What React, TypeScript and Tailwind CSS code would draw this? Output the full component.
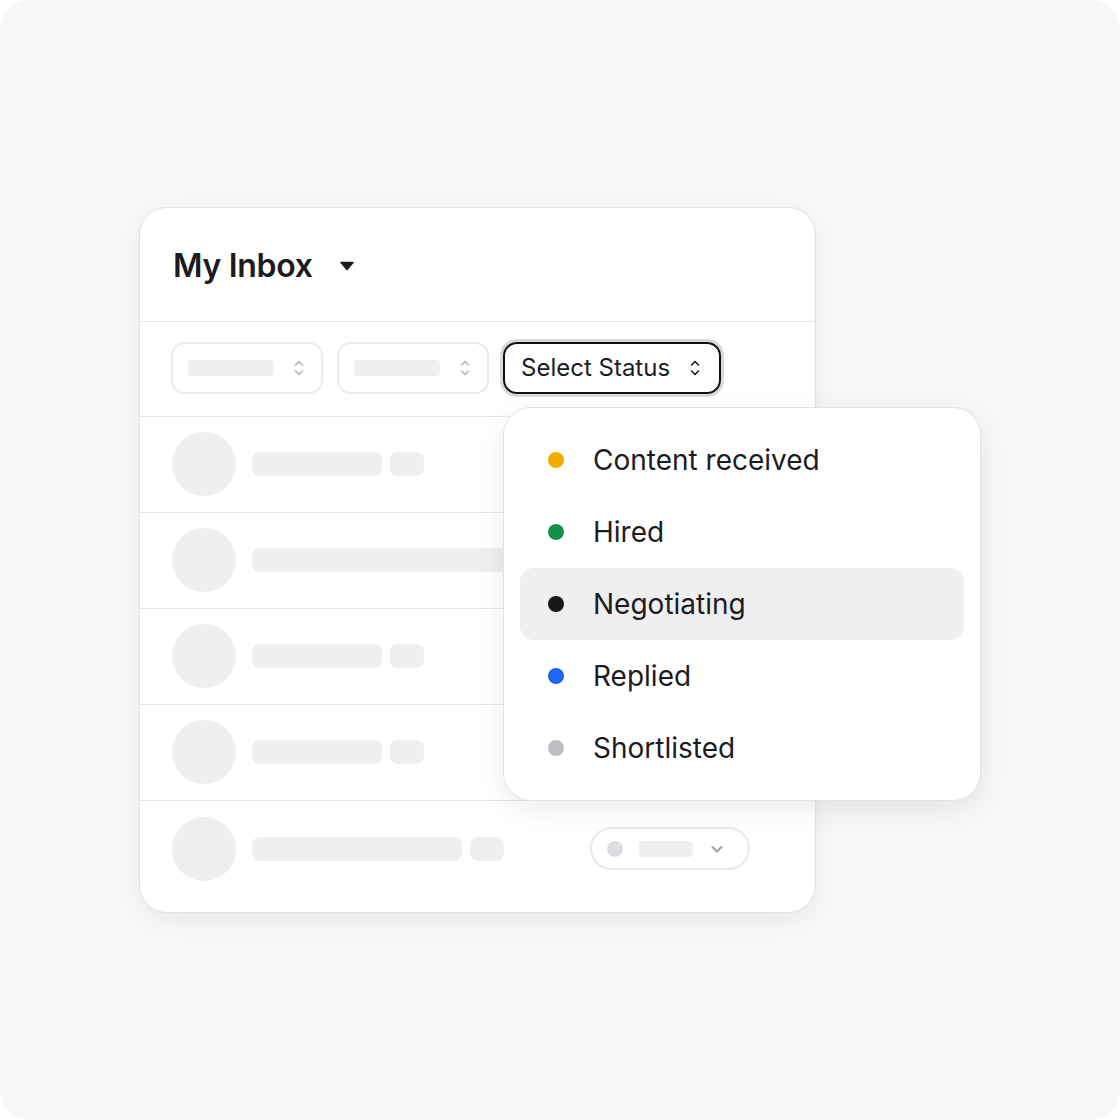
import React from 'react';

const font = { fontFamily: 'Inter, "Noto Sans", sans-serif' };

function UpDown({ color = '#a1a1aa', w = 12 }: { color?: string; w?: number }) {
  return (
    <svg width={w} height={w * 1.5} viewBox="0 0 12 18" fill="none">
      <path d="M2.5 6 L6 2.5 L9.5 6" stroke={color} strokeWidth="1.6" strokeLinecap="round" strokeLinejoin="round" />
      <path d="M2.5 12 L6 15.5 L9.5 12" stroke={color} strokeWidth="1.6" strokeLinecap="round" strokeLinejoin="round" />
    </svg>
  );
}

function SkelSelect() {
  return (
    <div className="flex h-[52px] w-[152px] items-center justify-between rounded-[14px] border-2 border-[#ececee] pl-[15px] pr-[16px]">
      <div className="h-[16px] w-[86px] rounded-[4px] bg-[#efeef0]" />
      <UpDown color="#b4b4bb" />
    </div>
  );
}

function Row({ long, wide, pill, last }: { long?: boolean; wide?: boolean; pill?: boolean; last?: boolean }) {
  return (
    <div className={`flex h-[96px] items-center pl-[32px] pb-[1px] ${last ? '' : 'border-b border-[#e6e6e8]'}`}>
      <div className="h-[64px] w-[64px] rounded-full bg-[#efeef0]" />
      {long ? (
        <div className="ml-[16px] h-[24px] w-[300px] rounded-[8px] bg-[#efeef0]" />
      ) : (
        <>
          <div className={`ml-[16px] h-[24px] rounded-[8px] bg-[#efeef0] ${wide ? 'w-[210px]' : 'w-[130px]'}`} />
          <div className="ml-[8px] h-[24px] w-[34px] rounded-[8px] bg-[#efeef0]" />
        </>
      )}
      {pill && (
        <div className="ml-[86px] flex h-[43px] w-[160px] items-center rounded-full border-2 border-[#e9e8eb] pl-[15px]">
          <div className="h-[16px] w-[16px] rounded-full bg-[#dedde1]" />
          <div className="ml-[16px] h-[16px] w-[54px] rounded-[4px] bg-[#efeef0]" />
          <svg className="ml-[16px]" width="16" height="16" viewBox="0 0 16 16" fill="none">
            <path d="M3.5 6 L8 10.5 L12.5 6" stroke="#a1a1aa" strokeWidth="2" strokeLinecap="round" strokeLinejoin="round" />
          </svg>
        </div>
      )}
    </div>
  );
}

const statuses = [
  { label: 'Content received', color: 'bg-[#f0ad00]' },
  { label: 'Hired', color: 'bg-[#13914b]' },
  { label: 'Negotiating', color: 'bg-[#18181b]', active: true },
  { label: 'Replied', color: 'bg-[#1f66f2]' },
  { label: 'Shortlisted', color: 'bg-[#bebdc2]' },
];

export default function App() {
  return (
    <div className="h-[1120px] w-[1120px] bg-white" style={font}>
      <div className="h-full w-full overflow-hidden rounded-[32px] bg-[#f8f6f7] pt-[207px] pl-[139px]">
        <div className="relative w-[677px] rounded-[28px] border border-[#e2e1e4] bg-white shadow-[0_8px_24px_rgba(0,0,0,0.06)]">
          {/* header */}
          <div className="flex h-[114px] items-center border-b border-[#e6e6e8] pl-[33px] pt-[2px]">
            <span className="text-[32px] font-semibold tracking-[-0.3px] text-[#1c1c1f]">My Inbox</span>
            <svg className="ml-[26px]" width="16" height="10" viewBox="0 0 16 10">
              <path d="M2 1.5 H14 L8 8.5 Z" fill="#1c1c1f" stroke="#1c1c1f" strokeWidth="1.5" strokeLinejoin="round" />
            </svg>
          </div>

          {/* filters */}
          <div className="flex h-[95px] items-start gap-[14px] border-b border-[#e6e6e8] pl-[31px] pt-[20px]">
            <SkelSelect />
            <SkelSelect />
            <div className="flex h-[52px] items-center gap-[19px] rounded-[14px] border-2 border-[#111113] pl-[16px] pr-[18px] shadow-[0_0_0_3px_#d8d7db]">
              <span className="text-[24px] text-[#1c1c1f]">Select Status</span>
              <UpDown color="#1c1c1f" />
            </div>
          </div>

          {/* rows */}
          <Row />
          <Row long />
          <Row />
          <Row />
          <div className="pb-[15px]">
            <Row wide pill last />
          </div>

          {/* dropdown */}
          <div className="absolute left-[363px] top-[199px] w-[478px] rounded-[28px] border border-[#e2e1e4] bg-white px-[16px] py-[16px] shadow-[0_8px_28px_rgba(0,0,0,0.08)]">
            {statuses.map((s) => (
              <div
                key={s.label}
                className={`flex h-[72px] items-center rounded-[14px] pl-[28px] ${s.active ? 'bg-[#efeef0]' : ''}`}
              >
                <div className={`h-[16px] w-[16px] rounded-full ${s.color}`} />
                <span className="ml-[29px] text-[28px] text-[#1c1c1f]">{s.label}</span>
              </div>
            ))}
          </div>
        </div>
      </div>
    </div>
  );
}
